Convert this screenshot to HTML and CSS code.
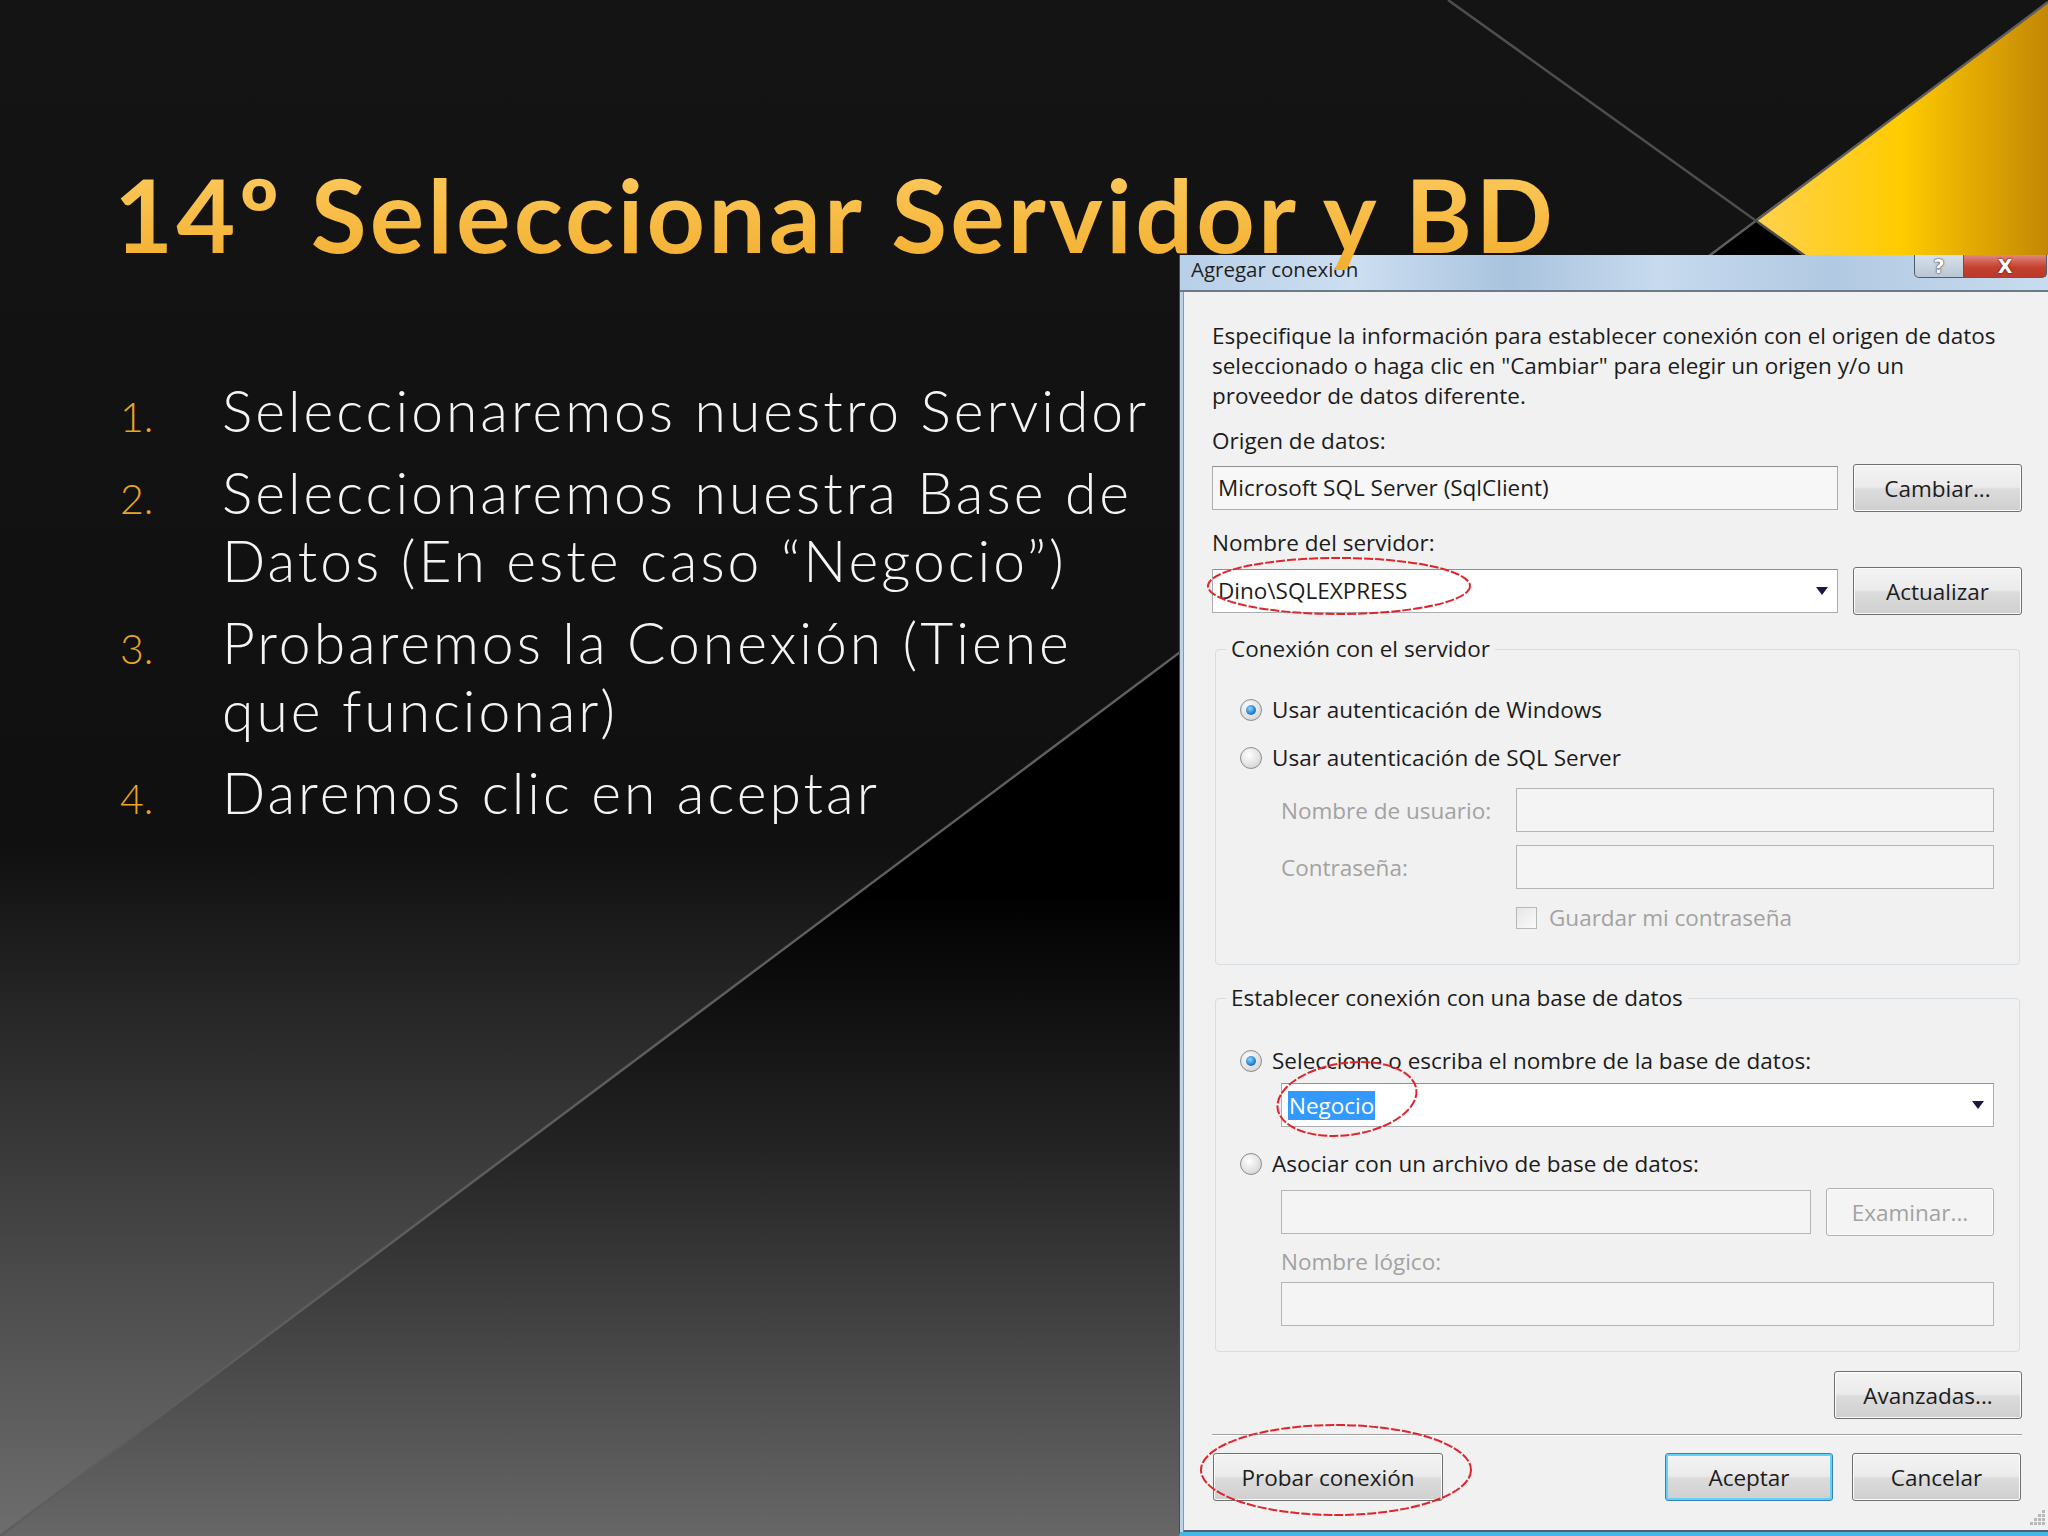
FILE: index.html
```html
<!DOCTYPE html>
<html lang="es">

<head>
    <meta charset="UTF-8">
    <meta name="viewport" content="width=device-width, initial-scale=1.0">
    <title>14º Seleccionar Servidor y BD</title>
    <link rel="stylesheet" href="styles.css">
</head>

<body>
    <div class="slide">
        <!-- slide background: diagonal split, thin lines and gold corner -->
        <svg class="backdrop" viewBox="0 0 2048 1536" width="2048" height="1536">
            <defs>
                <linearGradient id="upperFill" x1="0" y1="0" x2="0" y2="1536" gradientUnits="userSpaceOnUse">
                    <stop offset="0" stop-color="#141414" />
                    <stop offset="0.55" stop-color="#101010" />
                    <stop offset="1" stop-color="#6e6e6e" />
                </linearGradient>
                <linearGradient id="lowerFill" x1="0" y1="0" x2="0" y2="1536" gradientUnits="userSpaceOnUse">
                    <stop offset="0.58" stop-color="#000000" />
                    <stop offset="0.75" stop-color="#242424" />
                    <stop offset="1" stop-color="#676767" />
                </linearGradient>
                <linearGradient id="goldFill" x1="1755" y1="0" x2="2048" y2="0" gradientUnits="userSpaceOnUse">
                    <stop offset="0" stop-color="#ffd24e" />
                    <stop offset="0.5" stop-color="#ffcb00" />
                    <stop offset="1" stop-color="#c48705" />
                </linearGradient>
            </defs>
            <rect x="0" y="0" width="2048" height="1536" fill="url(#upperFill)" />
            <polygon points="0,1536 2048,2 2048,1536" fill="url(#lowerFill)" />
            <polygon points="1755,220 2048,2 2048,430" fill="url(#goldFill)" />
            <line x1="0" y1="1536" x2="2048" y2="2" stroke="#5e5e5e" stroke-width="2.5" />
            <line x1="1448" y1="0" x2="2048" y2="430" stroke="#4e4e4e" stroke-width="2.5" />
        </svg>

        <div class="slide-text">
            <h1 class="slide-title">14º Seleccionar Servidor y BD</h1>
            <ol class="steps">
                <li><span class="num">1.</span><span class="step">Seleccionaremos nuestro Servidor</span></li>
                <li><span class="num">2.</span><span class="step">Seleccionaremos nuestra Base de<br>Datos (En este caso “Negocio”)</span></li>
                <li><span class="num">3.</span><span class="step">Probaremos la Conexión (Tiene<br>que funcionar)</span></li>
                <li><span class="num">4.</span><span class="step">Daremos clic en aceptar</span></li>
            </ol>
        </div>

        <!-- screenshot of the dialog -->
        <div class="dialog">
            <div class="titlebar">
                <span class="caption">Agregar conexión</span>
                <div class="caption-buttons">
                    <span class="cap-help">?</span>
                    <span class="cap-close">X</span>
                </div>
            </div>
            <div class="client">
                <p class="intro">Especifique la información para establecer conexión con el origen de datos<br>seleccionado o haga clic en "Cambiar" para elegir un origen y/o un<br>proveedor de datos diferente.</p>

                <div class="label label-first">Origen de datos:</div>
                <div class="row">
                    <div class="field readonly">Microsoft SQL Server (SqlClient)</div>
                    <button class="btn btn-side">Cambiar...</button>
                </div>

                <div class="label">Nombre del servidor:</div>
                <div class="row row-tight">
                    <div class="field combo">Dino\SQLEXPRESS<span class="arrow"></span></div>
                    <button class="btn btn-side">Actualizar</button>
                </div>

                <fieldset class="group group-server">
                    <legend>Conexión con el servidor</legend>
                    <div class="group-body">
                        <div class="option"><span class="radio checked"></span>Usar autenticación de Windows</div>
                        <div class="option option-next"><span class="radio"></span>Usar autenticación de SQL Server</div>
                        <div class="cred cred-user"><span class="dim cred-label">Nombre de usuario:</span><div class="field disabled"></div></div>
                        <div class="cred cred-pass"><span class="dim cred-label">Contraseña:</span><div class="field disabled"></div></div>
                        <div class="check-row"><span class="checkbox"></span><span class="dim">Guardar mi contraseña</span></div>
                    </div>
                </fieldset>

                <fieldset class="group group-db">
                    <legend>Establecer conexión con una base de datos</legend>
                    <div class="group-body">
                        <div class="option"><span class="radio checked"></span>Seleccione o escriba el nombre de la base de datos:</div>
                        <div class="field combo db-combo"><span class="selected">Negocio</span><span class="arrow"></span></div>
                        <div class="option option-file"><span class="radio"></span>Asociar con un archivo de base de datos:</div>
                        <div class="browse-row">
                            <div class="field disabled"></div>
                            <button class="btn btn-browse" disabled>Examinar...</button>
                        </div>
                        <div class="dim logical-label">Nombre lógico:</div>
                        <div class="field disabled logical-field"></div>
                    </div>
                </fieldset>

                <div class="advanced-row"><button class="btn btn-advanced">Avanzadas...</button></div>
                <div class="separator"></div>
                <div class="footer">
                    <button class="btn btn-test">Probar conexión</button>
                    <button class="btn btn-ok">Aceptar</button>
                    <button class="btn btn-cancel">Cancelar</button>
                </div>

                <svg class="grip" viewBox="0 0 16 16" width="16" height="16">
                    <rect x="12" y="0" width="3" height="3" fill="#b8b8b8" />
                    <rect x="8" y="4" width="3" height="3" fill="#b8b8b8" />
                    <rect x="12" y="4" width="3" height="3" fill="#b8b8b8" />
                    <rect x="4" y="8" width="3" height="3" fill="#b8b8b8" />
                    <rect x="8" y="8" width="3" height="3" fill="#b8b8b8" />
                    <rect x="12" y="8" width="3" height="3" fill="#b8b8b8" />
                    <rect x="0" y="12" width="3" height="3" fill="#b8b8b8" />
                    <rect x="4" y="12" width="3" height="3" fill="#b8b8b8" />
                    <rect x="8" y="12" width="3" height="3" fill="#b8b8b8" />
                    <rect x="12" y="12" width="3" height="3" fill="#b8b8b8" />
                </svg>
            </div>

            <!-- red hand-drawn marks -->
            <svg class="marks" viewBox="0 0 869 1281" width="869" height="1281">
                <ellipse cx="159" cy="331" rx="131" ry="28" />
                <ellipse cx="167" cy="844" rx="70" ry="36" transform="rotate(-8 167 844)" />
                <ellipse cx="156" cy="1215" rx="135" ry="45" />
            </svg>
        </div>
    </div>
</body>

</html>
```

FILE: styles.css
```css
* {
    box-sizing: border-box;
}

body {
    margin: 0;
    background-color: #111;
}

.slide {
    position: relative;
    width: 2048px;
    height: 1536px;
    overflow: hidden;
    font-family: Lato, "Liberation Sans", sans-serif;
}

.backdrop {
    position: absolute;
    left: 0;
    top: 0;
}

/* Slide text */
.slide-text {
    position: relative;
    z-index: 2;
    padding: 153px 0 0 114px;
}

.slide-title {
    margin: 0;
    font-size: 102px;
    font-weight: 700;
    line-height: 1.2;
    letter-spacing: 3.2px;
    color: #f7bb42;
    background: linear-gradient(#fdcd62, #f2ad2c);
    -webkit-background-clip: text;
    background-clip: text;
    -webkit-text-fill-color: transparent;
    width: max-content;
}

.steps {
    list-style: none;
    margin: 101px 0 0 6px;
    padding: 0;
    width: 1060px;
}

.steps li {
    display: grid;
    grid-template-columns: 102px 1fr;
    align-items: baseline;
    margin-top: 14px;
}

.steps li:first-child {
    margin-top: 0;
}

.num {
    font-size: 41px;
    font-weight: 300;
    color: #eba51f;
}

.step {
    font-size: 57px;
    font-weight: 300;
    line-height: 68px;
    letter-spacing: 3px;
    color: #f4f4f4;
}

/* Dialog */
.dialog {
    position: absolute;
    left: 1179px;
    top: 255px;
    z-index: 1;
    width: 869px;
    height: 1281px;
    display: flex;
    flex-direction: column;
    background: #bfd3e8;
    border-left: 1px solid #3e4c5a;
    border-bottom: 4px solid #45b6e6;
    font-family: "Open Sans", sans-serif;
    font-size: 22.5px;
    color: #1c1c1c;
}

.titlebar {
    height: 37px;
    flex: none;
    display: flex;
    justify-content: space-between;
    align-items: flex-start;
    background: linear-gradient(to right, #b7cfe8, #cddff1 20%, #a9c3de 38%, #c7daee 55%, #b1c9e2 75%, #c9dcef);
    border-bottom: 2px solid #6b7a8a;
}

.caption {
    padding: 2px 0 0 11px;
    font-size: 20.5px;
    line-height: 24px;
    color: #1e1e1e;
}

.caption-buttons {
    display: flex;
    margin-right: 1px;
}

.cap-help,
.cap-close {
    height: 23px;
    display: flex;
    align-items: center;
    justify-content: center;
    font-family: "DejaVu Sans", sans-serif;
    font-weight: 700;
    font-size: 19px;
    line-height: 1;
    color: #fff;
    border: 1px solid #4f5c6a;
    border-top: none;
}

.cap-help {
    width: 50px;
    background: linear-gradient(#d8e1ea, #b8c6d4);
    border-radius: 0 0 0 5px;
    text-shadow: 0 0 2px #333, 0 0 1px #333;
}

.cap-close {
    width: 83px;
    background: linear-gradient(#df8a7e, #c5402f 55%, #b9392a);
    border-left: none;
    border-radius: 0 0 5px 0;
    text-shadow: 0 0 2px #5a1008, 0 0 1px #5a1008;
}

.client {
    position: relative;
    flex: 1;
    margin-left: 3px;
    padding: 29px 26px 0 28px;
    background: #f1f1f1;
    border-left: 1px solid #8797a8;
    border-bottom: 2px solid #52606e;
}

.intro {
    margin: 0;
    line-height: 30px;
}

.label {
    line-height: 30px;
    margin-top: 16px;
}

.label-first {
    margin-top: 15px;
}

.row {
    display: flex;
    align-items: center;
    gap: 15px;
    margin-top: 8px;
}

.row-tight {
    margin-top: 9px;
}

.field {
    position: relative;
    height: 44px;
    line-height: 42px;
    padding-left: 5px;
    background: #fff;
    border: 1px solid #abadb3;
    border-top-color: #8f9095;
    white-space: nowrap;
}

.row .field {
    flex: 1;
}

.field.readonly {
    background: #f7f7f7;
}

.field.disabled {
    background: #f4f4f4;
    border-color: #b5b5b5;
}

.arrow {
    position: absolute;
    right: 9px;
    top: 17px;
    border-left: 6px solid transparent;
    border-right: 6px solid transparent;
    border-top: 8px solid #1a1a40;
}

.btn {
    height: 48px;
    padding: 0;
    font-family: inherit;
    font-size: inherit;
    color: #1c1c1c;
    border: 1px solid #707070;
    border-radius: 3px;
    background: linear-gradient(#f3f3f3, #ebebeb 48%, #dcdcdc 52%, #cfcfcf);
    box-shadow: inset 0 0 0 1px #fbfbfb;
}

.btn-side {
    width: 169px;
}

/* Group boxes */
.group {
    margin: 19px 2px 0 3px;
    min-width: 0;
    padding: 31px 25px 31px 10px;
    border: 1px solid #d5dde3;
    border-radius: 4px;
}

.group legend {
    padding: 0 5px;
    line-height: 30px;
}

.group-body {
    padding-left: 14px;
}

.group-db {
    margin-top: 18px;
    padding-top: 33px;
    padding-bottom: 25px;
}

.option {
    display: flex;
    align-items: center;
    gap: 10px;
    line-height: 30px;
}

.option-next {
    margin-top: 18px;
}

.radio {
    position: relative;
    width: 22px;
    height: 22px;
    flex: none;
    border-radius: 50%;
    border: 1px solid #8b8d8f;
    background: radial-gradient(circle at 40% 35%, #ffffff, #e0e0e0 60%, #c8c8c8);
}

.radio.checked::after {
    content: "";
    position: absolute;
    left: 5px;
    top: 5px;
    width: 10px;
    height: 10px;
    border-radius: 50%;
    background: radial-gradient(circle at 40% 35%, #8fd8ff, #2a86d4 55%, #0e4f96);
}

.dim {
    color: #a2a2a2;
}

.cred {
    display: flex;
    align-items: center;
    margin-left: 41px;
}

.cred-user {
    margin-top: 15px;
}

.cred-pass {
    margin-top: 13px;
}

.cred-label {
    width: 235px;
    flex: none;
}

.cred .field {
    flex: 1;
}

.check-row {
    display: flex;
    align-items: center;
    gap: 12px;
    margin: 14px 0 0 276px;
    line-height: 30px;
}

.checkbox {
    width: 21px;
    height: 22px;
    border: 1px solid #b7b7b7;
    background: linear-gradient(135deg, #e6e6e6, #fafafa);
}

.db-combo {
    margin: 7px 0 0 41px;
    line-height: 40px;
}

.selected {
    display: inline-block;
    margin-left: 1px;
    padding: 0 1px;
    line-height: 29px;
    vertical-align: middle;
    background: #3399ff;
    color: #fff;
}

.option-file {
    margin-top: 22px;
}

.browse-row {
    display: flex;
    align-items: center;
    gap: 15px;
    margin: 9px 0 0 41px;
}

.browse-row .field {
    flex: 1;
}

.btn-browse {
    width: 168px;
    color: #a2a2a2;
    border-color: #adb2b5;
    background: #f4f4f4;
}

.logical-label {
    margin: 11px 0 0 41px;
    line-height: 30px;
}

.logical-field {
    margin: 5px 0 0 41px;
}

.advanced-row {
    display: flex;
    justify-content: flex-end;
    margin-top: 19px;
}

.btn-advanced {
    width: 188px;
}

.separator {
    margin-top: 15px;
    height: 2px;
    border-top: 1px solid #a0a0a0;
    border-bottom: 1px solid #ffffff;
}

.footer {
    display: flex;
    gap: 19px;
    margin-top: 17px;
}

.btn-test {
    width: 230px;
    margin-left: 1px;
    margin-right: auto;
}

.btn-ok {
    width: 168px;
    border-color: #3c7fb1;
    box-shadow: inset 0 0 0 2px #5fd3f7;
}

.btn-cancel {
    width: 169px;
    margin-right: 1px;
}

.grip {
    position: absolute;
    right: 2px;
    bottom: 4px;
}

.marks {
    position: absolute;
    left: 0;
    top: 0;
    pointer-events: none;
}

.marks ellipse {
    fill: none;
    stroke: #e0242c;
    stroke-width: 2;
    stroke-dasharray: 9 2;
}
```
